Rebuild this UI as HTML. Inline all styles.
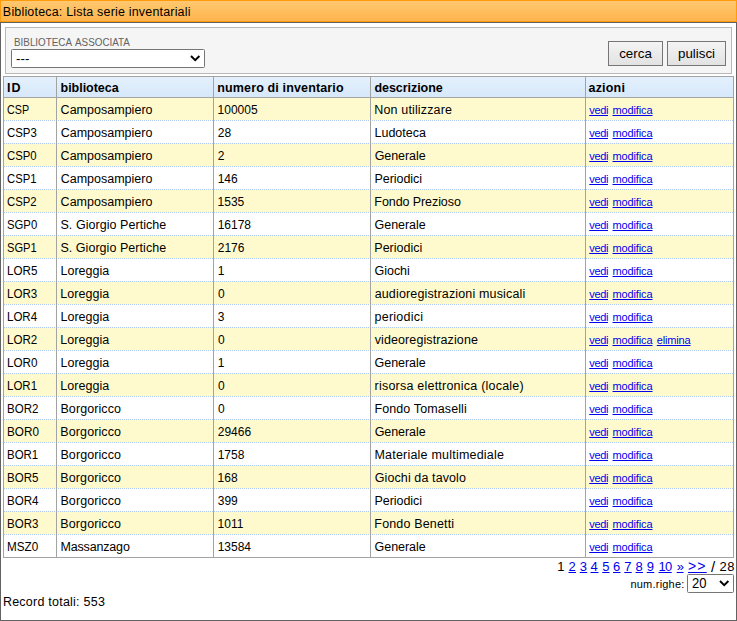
<!DOCTYPE html>
<html><head><meta charset="utf-8"><title>Biblioteca: Lista serie inventariali</title>
<style>
*{box-sizing:border-box;margin:0;padding:0}
html,body{width:737px;height:621px;overflow:hidden;background:#fff}
body{font-family:"Liberation Sans",sans-serif;font-size:12px;color:#000;position:relative}
div,span,a{position:absolute;white-space:nowrap;transform-origin:0 0}
#bar{left:0;top:0;width:737px;height:22px;border:1px solid #ff9a0c;background:linear-gradient(#ffc86f,#ffb44d)}
#win{left:0;top:22px;width:737px;height:599px;border:1px solid #626262;background:#fff}
#filter{left:5px;top:27px;width:727px;height:47px;border:1px solid #b9b9b9;background:#f5f5f5}
.sel{border:1px solid #767676;border-radius:1.5px;background:#fff}
.btn{top:41px;height:25px;border:1px solid #767676;background:linear-gradient(#f4f4f4,#e2e2e2);font-size:13.33px;line-height:23px;text-align:center}
#tb{left:3px;top:76px;width:731px;height:482px;border:1px solid #a3a3a3}
#hd{left:4px;top:77px;width:729px;height:21px;border-bottom:1px solid #a3a3a3;background:linear-gradient(#e4f0fc,#d6e8fb)}
.r{left:4px;width:729px;height:23px}
.o{background:#fffacd}
.d{left:4px;width:729px;height:1px;background:repeating-linear-gradient(90deg,#aecaf0 0,#aecaf0 1px,transparent 1px,transparent 2px)}
.v{top:77px;width:1px;height:480px;background:#a3a3a3}
.t{line-height:14px;height:14px}
.h{font-weight:bold}
.w{font-size:12.5px}
a{font-size:11px;line-height:13px;height:13px;color:#0000ee;text-decoration:underline}
.p{font-size:13px;line-height:15px;height:15px;top:559px}
a.p{font-size:13px;line-height:15px;height:15px}
</style></head><body>
<div id="win"></div>
<div id="bar"></div>
<div id="filter"></div>
<span id="title" class="t w" style="left:2.86px;top:5px;letter-spacing:0.179px;">Biblioteca: Lista serie inventariali</span>
<span id="flabel" class="t" style="left:14.00px;top:35px;transform:scaleX(0.8955);font-size:11px;color:#626262;word-spacing:1.5px;">BIBLIOTECA ASSOCIATA</span>
<div class="sel" style="left:11px;top:49px;width:194px;height:19px"><span style="left:4px;top:1px;font-size:13.33px;line-height:16px">---</span><svg style="position:absolute;left:177.9px;top:4.8px" width="11" height="7" viewBox="0 0 11 7"><path d="M1 1 L5.2 5.2 L9.4 1" fill="none" stroke="#000" stroke-width="1.9"/></svg></div>
<div class="btn" style="left:608px;width:55px">cerca</div>
<div class="btn" style="left:667px;width:59px">pulisci</div>
<div id="tb"></div>
<div id="hd"></div>
<div class="r o" style="top:98px;height:22px"></div>
<div class="r o" style="top:143px;height:23px"></div>
<div class="r o" style="top:189px;height:23px"></div>
<div class="r o" style="top:235px;height:23px"></div>
<div class="r o" style="top:281px;height:23px"></div>
<div class="r o" style="top:327px;height:23px"></div>
<div class="r o" style="top:373px;height:23px"></div>
<div class="r o" style="top:419px;height:23px"></div>
<div class="r o" style="top:465px;height:23px"></div>
<div class="r o" style="top:511px;height:23px"></div>
<div class="d" style="top:120px"></div>
<div class="d" style="top:143px"></div>
<div class="d" style="top:166px"></div>
<div class="d" style="top:189px"></div>
<div class="d" style="top:212px"></div>
<div class="d" style="top:235px"></div>
<div class="d" style="top:258px"></div>
<div class="d" style="top:281px"></div>
<div class="d" style="top:304px"></div>
<div class="d" style="top:327px"></div>
<div class="d" style="top:350px"></div>
<div class="d" style="top:373px"></div>
<div class="d" style="top:396px"></div>
<div class="d" style="top:419px"></div>
<div class="d" style="top:442px"></div>
<div class="d" style="top:465px"></div>
<div class="d" style="top:488px"></div>
<div class="d" style="top:511px"></div>
<div class="d" style="top:534px"></div>
<div class="v" style="left:56px"></div>
<div class="v" style="left:213px"></div>
<div class="v" style="left:370px"></div>
<div class="v" style="left:585px"></div>
<span id="h_id" class="t h w" style="left:7.04px;top:81px;letter-spacing:0.875px;">ID</span>
<span id="h_bib" class="t h w" style="left:60.59px;top:81px;letter-spacing:-0.037px;">biblioteca</span>
<span id="h_num" class="t h w" style="left:217.24px;top:81px;letter-spacing:0.142px;">numero di inventario</span>
<span id="h_des" class="t h w" style="left:374.43px;top:81px;letter-spacing:-0.045px;">descrizione</span>
<span id="h_az" class="t h w" style="left:588.54px;top:81px;letter-spacing:0.193px;">azioni</span>
<span id="a0" class="t" style="left:7.00px;top:103px;transform:scaleX(0.8928);">CSP</span>
<span id="b0" class="t w" style="left:60.60px;top:103px;letter-spacing:0.018px;">Camposampiero</span>
<span id="c0" class="t" style="left:217.55px;top:103px;">100005</span>
<span id="d0" class="t w" style="left:374.29px;top:103px;letter-spacing:0.151px;">Non utilizzare</span>
<a id="v0" style="left:589.25px;top:104px;letter-spacing:-0.359px;">vedi</a>
<a id="m0" style="left:612.50px;top:104px;letter-spacing:-0.121px;">modifica</a>
<span id="a1" class="t" style="left:7.00px;top:126px;transform:scaleX(0.9504);">CSP3</span>
<span id="b1" class="t w" style="left:60.70px;top:126px;letter-spacing:0.003px;">Camposampiero</span>
<span id="c1" class="t" style="left:217.87px;top:126px;">28</span>
<span id="d1" class="t w" style="left:374.44px;top:126px;letter-spacing:0.023px;">Ludoteca</span>
<a id="v1" style="left:589.25px;top:127px;letter-spacing:-0.359px;">vedi</a>
<a id="m1" style="left:612.50px;top:127px;letter-spacing:-0.121px;">modifica</a>
<span id="a2" class="t" style="left:7.00px;top:149px;transform:scaleX(0.9450);">CSP0</span>
<span id="b2" class="t w" style="left:60.60px;top:149px;letter-spacing:0.018px;">Camposampiero</span>
<span id="c2" class="t" style="left:217.76px;top:149px;">2</span>
<span id="d2" class="t w" style="left:374.72px;top:149px;letter-spacing:-0.077px;">Generale</span>
<a id="v2" style="left:589.25px;top:150px;letter-spacing:-0.359px;">vedi</a>
<a id="m2" style="left:612.50px;top:150px;letter-spacing:-0.121px;">modifica</a>
<span id="a3" class="t" style="left:7.00px;top:172px;transform:scaleX(0.9383);">CSP1</span>
<span id="b3" class="t w" style="left:60.70px;top:172px;letter-spacing:0.003px;">Camposampiero</span>
<span id="c3" class="t" style="left:217.68px;top:172px;">146</span>
<span id="d3" class="t w" style="left:374.45px;top:172px;letter-spacing:-0.033px;">Periodici</span>
<a id="v3" style="left:589.25px;top:173px;letter-spacing:-0.359px;">vedi</a>
<a id="m3" style="left:612.50px;top:173px;letter-spacing:-0.121px;">modifica</a>
<span id="a4" class="t" style="left:7.00px;top:195px;transform:scaleX(0.9448);">CSP2</span>
<span id="b4" class="t w" style="left:60.60px;top:195px;letter-spacing:0.018px;">Camposampiero</span>
<span id="c4" class="t" style="left:217.55px;top:195px;">1535</span>
<span id="d4" class="t w" style="left:374.33px;top:195px;letter-spacing:-0.080px;">Fondo Prezioso</span>
<a id="v4" style="left:589.25px;top:196px;letter-spacing:-0.359px;">vedi</a>
<a id="m4" style="left:612.50px;top:196px;letter-spacing:-0.121px;">modifica</a>
<span id="a5" class="t" style="left:7.00px;top:218px;transform:scaleX(0.9426);">SGP0</span>
<span id="b5" class="t w" style="left:60.48px;top:218px;letter-spacing:0.049px;">S. Giorgio Pertiche</span>
<span id="c5" class="t" style="left:217.68px;top:218px;">16178</span>
<span id="d5" class="t w" style="left:374.62px;top:218px;letter-spacing:-0.063px;">Generale</span>
<a id="v5" style="left:589.25px;top:219px;letter-spacing:-0.359px;">vedi</a>
<a id="m5" style="left:612.50px;top:219px;letter-spacing:-0.121px;">modifica</a>
<span id="a6" class="t" style="left:7.00px;top:241px;transform:scaleX(0.9267);">SGP1</span>
<span id="b6" class="t w" style="left:60.38px;top:241px;letter-spacing:0.047px;">S. Giorgio Pertiche</span>
<span id="c6" class="t" style="left:217.76px;top:241px;">2176</span>
<span id="d6" class="t w" style="left:374.33px;top:241px;letter-spacing:-0.006px;">Periodici</span>
<a id="v6" style="left:589.25px;top:242px;letter-spacing:-0.359px;">vedi</a>
<a id="m6" style="left:612.50px;top:242px;letter-spacing:-0.121px;">modifica</a>
<span id="a7" class="t" style="left:7.00px;top:264px;transform:scaleX(0.9690);">LOR5</span>
<span id="b7" class="t w" style="left:60.45px;top:264px;letter-spacing:0.025px;">Loreggia</span>
<span id="c7" class="t" style="left:217.68px;top:264px;">1</span>
<span id="d7" class="t w" style="left:374.62px;top:264px;letter-spacing:-0.058px;">Giochi</span>
<a id="v7" style="left:589.25px;top:265px;letter-spacing:-0.359px;">vedi</a>
<a id="m7" style="left:612.50px;top:265px;letter-spacing:-0.121px;">modifica</a>
<span id="a8" class="t" style="left:7.00px;top:287px;transform:scaleX(0.9648);">LOR3</span>
<span id="b8" class="t w" style="left:60.32px;top:287px;letter-spacing:0.030px;">Loreggia</span>
<span id="c8" class="t" style="left:218.05px;top:287px;">0</span>
<span id="d8" class="t w" style="left:374.67px;top:287px;letter-spacing:0.153px;">audioregistrazioni musicali</span>
<a id="v8" style="left:589.25px;top:288px;letter-spacing:-0.359px;">vedi</a>
<a id="m8" style="left:612.50px;top:288px;letter-spacing:-0.121px;">modifica</a>
<span id="a9" class="t" style="left:7.00px;top:310px;transform:scaleX(0.9598);">LOR4</span>
<span id="b9" class="t w" style="left:60.45px;top:310px;letter-spacing:0.025px;">Loreggia</span>
<span id="c9" class="t" style="left:217.74px;top:310px;">3</span>
<span id="d9" class="t w" style="left:374.54px;top:310px;letter-spacing:0.239px;">periodici</span>
<a id="v9" style="left:589.25px;top:311px;letter-spacing:-0.359px;">vedi</a>
<a id="m9" style="left:612.50px;top:311px;letter-spacing:-0.121px;">modifica</a>
<span id="a10" class="t" style="left:7.00px;top:333px;transform:scaleX(0.9650);">LOR2</span>
<span id="b10" class="t w" style="left:60.32px;top:333px;letter-spacing:0.030px;">Loreggia</span>
<span id="c10" class="t" style="left:218.05px;top:333px;">0</span>
<span id="d10" class="t w" style="left:374.67px;top:333px;letter-spacing:0.107px;">videoregistrazione</span>
<a id="v10" style="left:589.25px;top:334px;letter-spacing:-0.359px;">vedi</a>
<a id="m10" style="left:612.50px;top:334px;letter-spacing:-0.121px;">modifica</a>
<a id="e10" style="left:656.75px;top:334px;letter-spacing:-0.158px;">elimina</a>
<span id="a11" class="t" style="left:7.00px;top:356px;transform:scaleX(0.9733);">LOR0</span>
<span id="b11" class="t w" style="left:60.45px;top:356px;letter-spacing:0.025px;">Loreggia</span>
<span id="c11" class="t" style="left:217.68px;top:356px;">1</span>
<span id="d11" class="t w" style="left:374.62px;top:356px;letter-spacing:-0.063px;">Generale</span>
<a id="v11" style="left:589.25px;top:357px;letter-spacing:-0.359px;">vedi</a>
<a id="m11" style="left:612.50px;top:357px;letter-spacing:-0.121px;">modifica</a>
<span id="a12" class="t" style="left:7.00px;top:379px;transform:scaleX(0.9585);">LOR1</span>
<span id="b12" class="t w" style="left:60.32px;top:379px;letter-spacing:0.030px;">Loreggia</span>
<span id="c12" class="t" style="left:218.05px;top:379px;">0</span>
<span id="d12" class="t w" style="left:374.55px;top:379px;letter-spacing:0.223px;">risorsa elettronica (locale)</span>
<a id="v12" style="left:589.25px;top:380px;letter-spacing:-0.359px;">vedi</a>
<a id="m12" style="left:612.50px;top:380px;letter-spacing:-0.121px;">modifica</a>
<span id="a13" class="t" style="left:7.00px;top:402px;transform:scaleX(0.9607);">BOR2</span>
<span id="b13" class="t w" style="left:60.45px;top:402px;letter-spacing:0.081px;">Borgoricco</span>
<span id="c13" class="t" style="left:218.05px;top:402px;">0</span>
<span id="d13" class="t w" style="left:374.45px;top:402px;letter-spacing:0.110px;">Fondo Tomaselli</span>
<a id="v13" style="left:589.25px;top:403px;letter-spacing:-0.359px;">vedi</a>
<a id="m13" style="left:612.50px;top:403px;letter-spacing:-0.121px;">modifica</a>
<span id="a14" class="t" style="left:7.00px;top:425px;transform:scaleX(0.9780);">BOR0</span>
<span id="b14" class="t w" style="left:60.33px;top:425px;letter-spacing:0.106px;">Borgoricco</span>
<span id="c14" class="t" style="left:217.76px;top:425px;">29466</span>
<span id="d14" class="t w" style="left:374.72px;top:425px;letter-spacing:-0.077px;">Generale</span>
<a id="v14" style="left:589.25px;top:426px;letter-spacing:-0.359px;">vedi</a>
<a id="m14" style="left:612.50px;top:426px;letter-spacing:-0.121px;">modifica</a>
<span id="a15" class="t" style="left:7.00px;top:448px;transform:scaleX(0.9550);">BOR1</span>
<span id="b15" class="t w" style="left:60.45px;top:448px;letter-spacing:0.081px;">Borgoricco</span>
<span id="c15" class="t" style="left:217.68px;top:448px;">1758</span>
<span id="d15" class="t w" style="left:374.45px;top:448px;letter-spacing:0.211px;">Materiale multimediale</span>
<a id="v15" style="left:589.25px;top:449px;letter-spacing:-0.359px;">vedi</a>
<a id="m15" style="left:612.50px;top:449px;letter-spacing:-0.121px;">modifica</a>
<span id="a16" class="t" style="left:7.00px;top:471px;transform:scaleX(0.9612);">BOR5</span>
<span id="b16" class="t w" style="left:60.33px;top:471px;letter-spacing:0.106px;">Borgoricco</span>
<span id="c16" class="t" style="left:217.55px;top:471px;">168</span>
<span id="d16" class="t w" style="left:374.72px;top:471px;letter-spacing:0.105px;">Giochi da tavolo</span>
<a id="v16" style="left:589.25px;top:472px;letter-spacing:-0.359px;">vedi</a>
<a id="m16" style="left:612.50px;top:472px;letter-spacing:-0.121px;">modifica</a>
<span id="a17" class="t" style="left:7.00px;top:494px;transform:scaleX(0.9649);">BOR4</span>
<span id="b17" class="t w" style="left:60.45px;top:494px;letter-spacing:0.081px;">Borgoricco</span>
<span id="c17" class="t" style="left:217.74px;top:494px;">399</span>
<span id="d17" class="t w" style="left:374.45px;top:494px;letter-spacing:-0.033px;">Periodici</span>
<a id="v17" style="left:589.25px;top:495px;letter-spacing:-0.359px;">vedi</a>
<a id="m17" style="left:612.50px;top:495px;letter-spacing:-0.121px;">modifica</a>
<span id="a18" class="t" style="left:7.00px;top:517px;transform:scaleX(0.9603);">BOR3</span>
<span id="b18" class="t w" style="left:60.33px;top:517px;letter-spacing:0.106px;">Borgoricco</span>
<span id="c18" class="t" style="left:217.55px;top:517px;">1011</span>
<span id="d18" class="t w" style="left:374.33px;top:517px;letter-spacing:0.162px;">Fondo Benetti</span>
<a id="v18" style="left:589.25px;top:518px;letter-spacing:-0.359px;">vedi</a>
<a id="m18" style="left:612.50px;top:518px;letter-spacing:-0.121px;">modifica</a>
<span id="a19" class="t" style="left:7.00px;top:540px;transform:scaleX(0.9746);">MSZ0</span>
<span id="b19" class="t w" style="left:60.45px;top:540px;letter-spacing:-0.164px;">Massanzago</span>
<span id="c19" class="t" style="left:217.68px;top:540px;">13584</span>
<span id="d19" class="t w" style="left:374.62px;top:540px;letter-spacing:-0.063px;">Generale</span>
<a id="v19" style="left:589.25px;top:541px;letter-spacing:-0.359px;">vedi</a>
<a id="m19" style="left:612.50px;top:541px;letter-spacing:-0.121px;">modifica</a>
<span id="p0" class="p" style="left:557.34px;top:559px;">1</span>
<a id="p1" class="p" style="left:568.50px;top:559px;letter-spacing:0.266px;">2</a>
<a id="p2" class="p" style="left:579.75px;top:559px;letter-spacing:0.266px;">3</a>
<a id="p3" class="p" style="left:590.50px;top:559px;letter-spacing:0.766px;">4</a>
<a id="p4" class="p" style="left:602.25px;top:559px;letter-spacing:0.016px;">5</a>
<a id="p5" class="p" style="left:613.00px;top:559px;letter-spacing:0.266px;">6</a>
<a id="p6" class="p" style="left:624.25px;top:559px;letter-spacing:0.266px;">7</a>
<a id="p7" class="p" style="left:635.50px;top:559px;letter-spacing:0.266px;">8</a>
<a id="p8" class="p" style="left:646.75px;top:559px;letter-spacing:0.266px;">9</a>
<a id="p9" class="p" style="left:658.50px;top:559px;letter-spacing:-0.609px;">10</a>
<a id="p10" class="p" style="left:676.75px;top:559px;letter-spacing:-0.484px;">»</a>
<a id="p11" class="p" style="left:688.00px;top:558.65px;letter-spacing:1.195px;font-size:14px;">&gt;&gt;</a>
<span id="p12" class="p" style="left:711.07px;top:559.3px;font-size:15px;">/</span>
<span id="p13" class="p" style="left:719.52px;top:559px;letter-spacing:0.427px;">28</span>
<span id="nr" class="t" style="left:630.48px;top:577px;letter-spacing:0.210px;font-size:11px;">num.righe:</span>
<div class="sel" style="left:687px;top:574px;width:47px;height:19px"><span style="left:4px;top:0px;font-size:14px;line-height:16px;transform:scaleX(0.93)">20</span><svg style="position:absolute;left:31px;top:4.9px" width="11" height="7" viewBox="0 0 11 7"><path d="M1 1 L5.2 5.2 L9.4 1" fill="none" stroke="#000" stroke-width="1.9"/></svg></div>
<span id="rec" class="t w" style="left:2.89px;top:595px;letter-spacing:0.235px;">Record totali: 553</span>
</body></html>
